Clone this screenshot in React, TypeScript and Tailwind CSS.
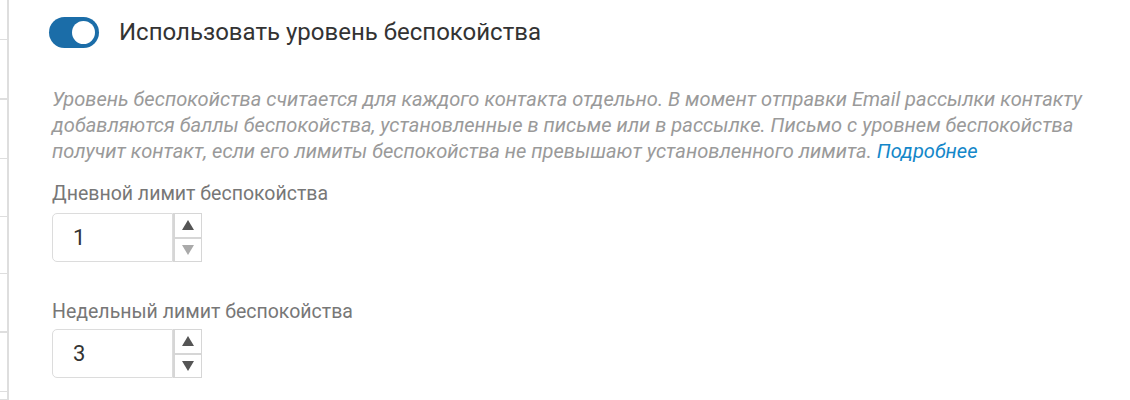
import { useState } from "react";

const rowLines = [40, 60, 59, 58, 57, 59, 59, 8];

function Spinner({ value, min }: { value: number; min: number }) {
  const atMin = value <= min;
  return (
    <div className="flex h-[49px]">
      <div className="flex w-[121px] items-center rounded-l-[5px] border border-[#dcdcdc] pl-[20px] text-[22px] text-[#333]">
        {value}
      </div>
      <div className="flex w-[29px] flex-col border border-l-2 border-[#d6d6d6]">
        <button className="flex flex-1 items-center justify-center border-b-2 border-[#d6d6d6] bg-white">
          <span className="h-0 w-0 border-x-[6px] border-b-[10px] border-x-transparent border-b-[#555]" />
        </button>
        <button className="flex flex-1 items-center justify-center bg-white">
          <span
            className={
              atMin
                ? "h-0 w-0 border-x-[6px] border-t-[10px] border-x-transparent border-t-[#aaa]"
                : "h-0 w-0 border-x-[6px] border-t-[10px] border-x-transparent border-t-[#555]"
            }
          />
        </button>
      </div>
    </div>
  );
}

export default function App() {
  const [enabled, setEnabled] = useState(true);

  return (
    <div className="flex h-[400px] w-[1130px] overflow-hidden bg-white font-['Roboto',sans-serif]">
      <div className="flex w-[9px] shrink-0 flex-col border-r-2 border-[#dedede]">
        {rowLines.map((h, i) => (
          <div
            key={i}
            style={{ height: h }}
            className={i === 1 || i === 5 ? "shrink-0 border-b-2 border-[#dedede]" : "shrink-0 border-b border-[#dedede]"}
          />
        ))}
      </div>

      <div className="flex-1 pl-[43px] pt-[14px]">
        <div className="flex items-center gap-[20px]">
          <button
            onClick={() => setEnabled(!enabled)}
            className="-ml-[3px] flex h-[31px] w-[50px] items-center justify-end rounded-full bg-[#1b6da8] pr-[4px]"
          >
            <span className="h-[23px] w-[23px] rounded-full bg-white" />
          </button>
          <span className="text-[24px] text-[#333]">Использовать уровень беспокойства</span>
        </div>

        <p className="mt-[36px] w-[1060px] text-[20.1px] italic leading-[26px] text-[#9a9a9a]">
          Уровень беспокойства считается для каждого контакта отдельно. В момент отправки Email рассылки контакту
          добавляются баллы беспокойства, установленные в письме или в рассылке. Письмо с уровнем беспокойства
          получит контакт, если его лимиты беспокойства не превышают установленного лимита.{" "}
          <a className="text-[#1487c9]">Подробнее</a>
        </p>

        <div className="mt-[17px] text-[19.5px] leading-[26px] text-[#777]">Дневной лимит беспокойства</div>
        <div className="mt-[6px]">
          <Spinner value={1} min={1} />
        </div>

        <div className="mt-[37px] text-[19.5px] leading-[26px] text-[#777]">Недельный лимит беспокойства</div>
        <div className="mt-[4px]">
          <Spinner value={3} min={1} />
        </div>
      </div>
    </div>
  );
}
